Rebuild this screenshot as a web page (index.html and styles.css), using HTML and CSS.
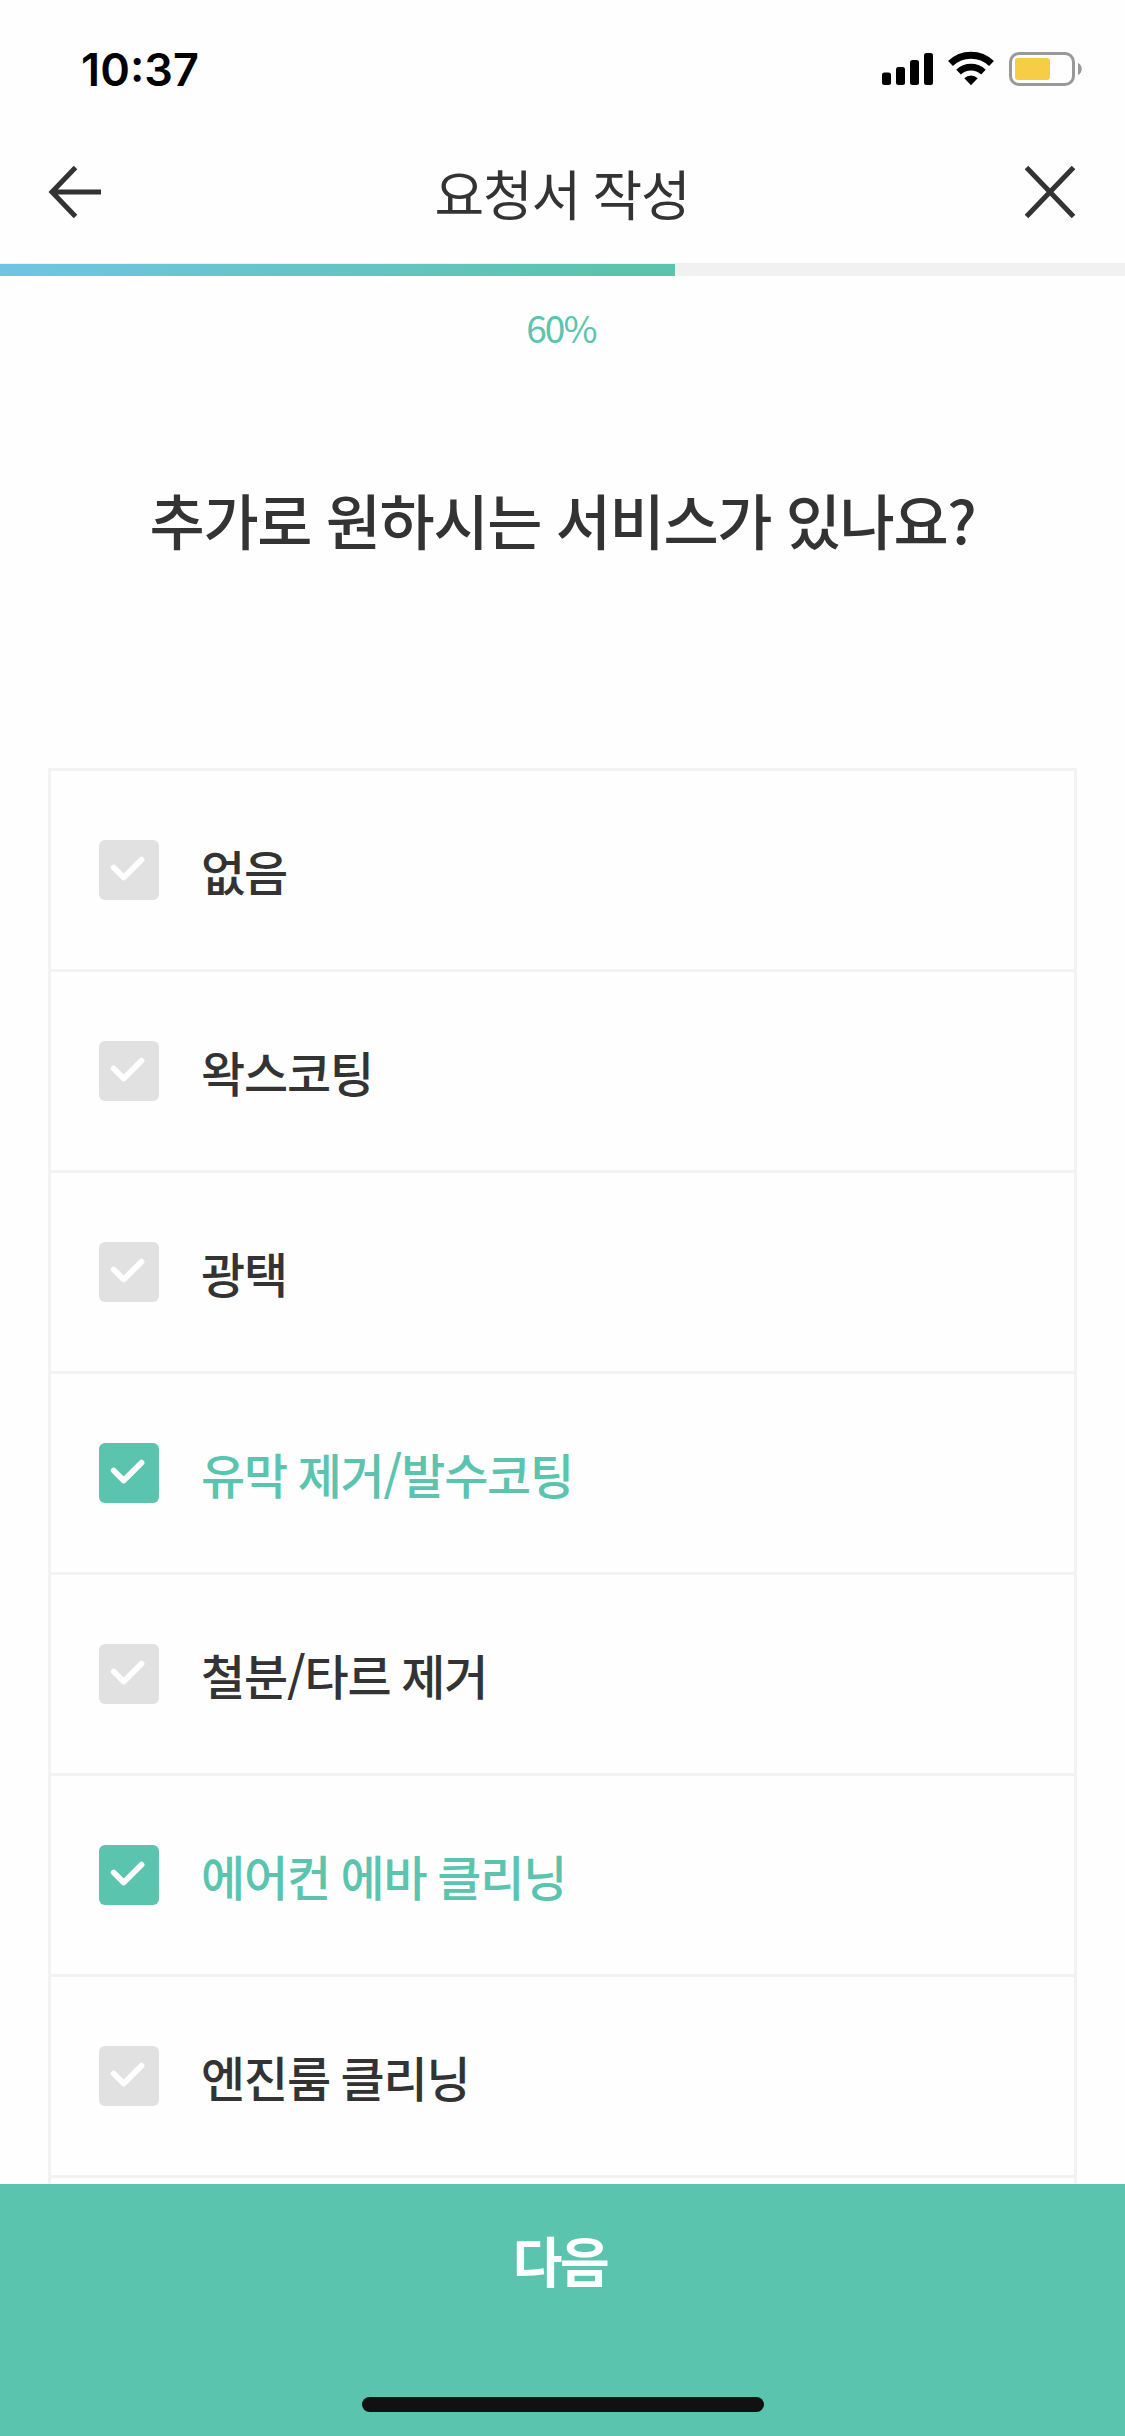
FILE: index.html
```html
<!DOCTYPE html>
<html lang="ko">
<head>
<meta charset="utf-8">
<title>요청서 작성</title>
<link rel="stylesheet" href="styles.css">
</head>
<body>
<div class="screen">
  <div class="status">
    <span class="time">10:37</span>
    <svg class="status-icons" width="202" height="36" viewBox="0 0 202 36">
      <rect x="0" y="21.5" width="9" height="12.5" rx="2.5"/>
      <rect x="14" y="16" width="9" height="18" rx="2.5"/>
      <rect x="28" y="9" width="9" height="25" rx="2.5"/>
      <rect x="42" y="2" width="9" height="32" rx="2.5"/>
      <g fill="none" stroke="#000">
        <path d="M68.5 12.5a29.5 29.5 0 0 1 41 0" stroke-width="7"/>
        <path d="M76.6 21.2a17.8 17.8 0 0 1 24.8 0" stroke-width="6.6"/>
      </g>
      <path d="M82.3 27.3a9.6 9.6 0 0 1 13.4 0L89 34.2z"/>
      <rect x="128.500" y="2.500" width="63" height="31" rx="8.500" fill="none" stroke="#999" stroke-width="3"/>
      <rect x="133" y="7" width="35" height="22" rx="3" fill="#f6cd45"/>
      <path d="M196 12c5 2 5 10 0 12z" fill="#999"/>
    </svg>
  </div>
  <header class="bar">
    <svg class="icon" width="54" height="54" viewBox="0 0 54 54"><path d="M53 27H4M27.500 2.500L4 27L27.500 51.500"/></svg>
    <h1 class="title">요청서 작성</h1>
    <svg class="icon" width="54" height="54" viewBox="0 0 54 54"><path d="M3.500 2.500L50.500 51.500M50.500 2.500L3.500 51.500"/></svg>
  </header>
  <div class="track"><div class="fill" style="width:60%"></div></div>
  <p class="percent">60%</p>
  <h2 class="question">추가로 원하시는 서비스가 있나요?</h2>
  <ul class="options">
    <li class="option"><svg class="check" viewBox="0 0 60 60"><path d="M14.700 27.500L24.700 37.500L42.500 19.700"/></svg><span>없음</span></li>
    <li class="option"><svg class="check" viewBox="0 0 60 60"><path d="M14.700 27.500L24.700 37.500L42.500 19.700"/></svg><span>왁스코팅</span></li>
    <li class="option"><svg class="check" viewBox="0 0 60 60"><path d="M14.700 27.500L24.700 37.500L42.500 19.700"/></svg><span>광택</span></li>
    <li class="option selected"><svg class="check" viewBox="0 0 60 60"><path d="M14.700 27.500L24.700 37.500L42.500 19.700"/></svg><span>유막 제거/발수코팅</span></li>
    <li class="option"><svg class="check" viewBox="0 0 60 60"><path d="M14.700 27.500L24.700 37.500L42.500 19.700"/></svg><span>철분/타르 제거</span></li>
    <li class="option selected"><svg class="check" viewBox="0 0 60 60"><path d="M14.700 27.500L24.700 37.500L42.500 19.700"/></svg><span>에어컨 에바 클리닝</span></li>
    <li class="option"><svg class="check" viewBox="0 0 60 60"><path d="M14.700 27.500L24.700 37.500L42.500 19.700"/></svg><span>엔진룸 클리닝</span></li>
  </ul>
  <footer class="footer">
    <div class="next">다음</div>
    <div class="home"></div>
  </footer>
</div>
</body>
</html>
```
FILE: styles.css
```css
* { box-sizing: border-box; }
body {
  margin: 0;
  background: #fefefe;
  color: #333;
  font-family: "Noto Sans CJK KR", sans-serif;
}
h1, h2, p, ul { margin: 0; padding: 0; }
.screen {
  width: 1125px;
  height: 2436px;
  display: flex;
  flex-direction: column;
  overflow: hidden;
}
.status {
  height: 132px;
  padding: 4px 41px 0 81px;
  display: flex;
  align-items: center;
  justify-content: space-between;
  flex: none;
}
.time {
  font: 600 45px/60px Inter, sans-serif;
  font-feature-settings: "case";
  letter-spacing: 0.1px;
  color: #000;
  padding-top: 3px;
}
.status-icons { display: block; margin-top: 2px; }
.bar {
  height: 131px;
  padding: 33px 48px 0;
  display: flex;
  align-items: flex-start;
  justify-content: space-between;
  flex: none;
}
.icon { fill: none; stroke: #333; stroke-width: 5; }
.title {
  padding: 1px 1px 0 0;
  font-size: 54px;
  font-weight: 400;
  line-height: 54px;
  letter-spacing: -1.2px;
  word-spacing: -1.2px;
}
.track { height: 13px; padding-top: 1px; background: #f1f1f1; flex: none; }
.fill { height: 12px; background: linear-gradient(90deg, #6fc5e2, #5bc4ad 90%); }
.percent {
  margin-top: 27px;
  padding-right: 3px;
  font-size: 37px;
  font-weight: 400;
  line-height: 48px;
  letter-spacing: -1.8px;
  text-align: center;
  color: #5bc4ae;
}
.question {
  margin: 132px 0 213px;
  font-size: 60px;
  font-weight: 500;
  line-height: 72px;
  letter-spacing: -1.4px;
  word-spacing: -0.6px;
  text-align: center;
}
.options {
  flex: 1;
  min-height: 0;
  margin: 0 48px;
  border: 3px solid #f2f2f2;
  border-bottom: 0;
  list-style: none;
}
.option {
  height: 201px;
  padding: 0 48px;
  border-bottom: 3px solid #f2f2f2;
  display: flex;
  align-items: center;
  gap: 42px;
  font-size: 48px;
  font-weight: 500;
  letter-spacing: -1.2px;
  word-spacing: -1.5px;
}
.check {
  width: 60px;
  height: 60px;
  border-radius: 6px;
  background: #e1e1e1;
  fill: none;
  stroke: #fefefe;
  stroke-width: 5.8;
  stroke-linecap: round;
  stroke-linejoin: round;
}
.selected { color: #5bc4ae; }
.selected .check { background: #5bc4ae; }
.footer {
  flex: none;
  height: 252px;
  background: #5bc4ae;
  display: flex;
  flex-direction: column;
  align-items: center;
  justify-content: space-between;
  padding-bottom: 24px;
}
.next {
  padding: 1px 5px 0 0;
  font-size: 54px;
  font-weight: 700;
  line-height: 150px;
  letter-spacing: -2.4px;
  color: #fff;
}
.home { width: 402px; height: 15px; border-radius: 8px; background: #111; }
```
